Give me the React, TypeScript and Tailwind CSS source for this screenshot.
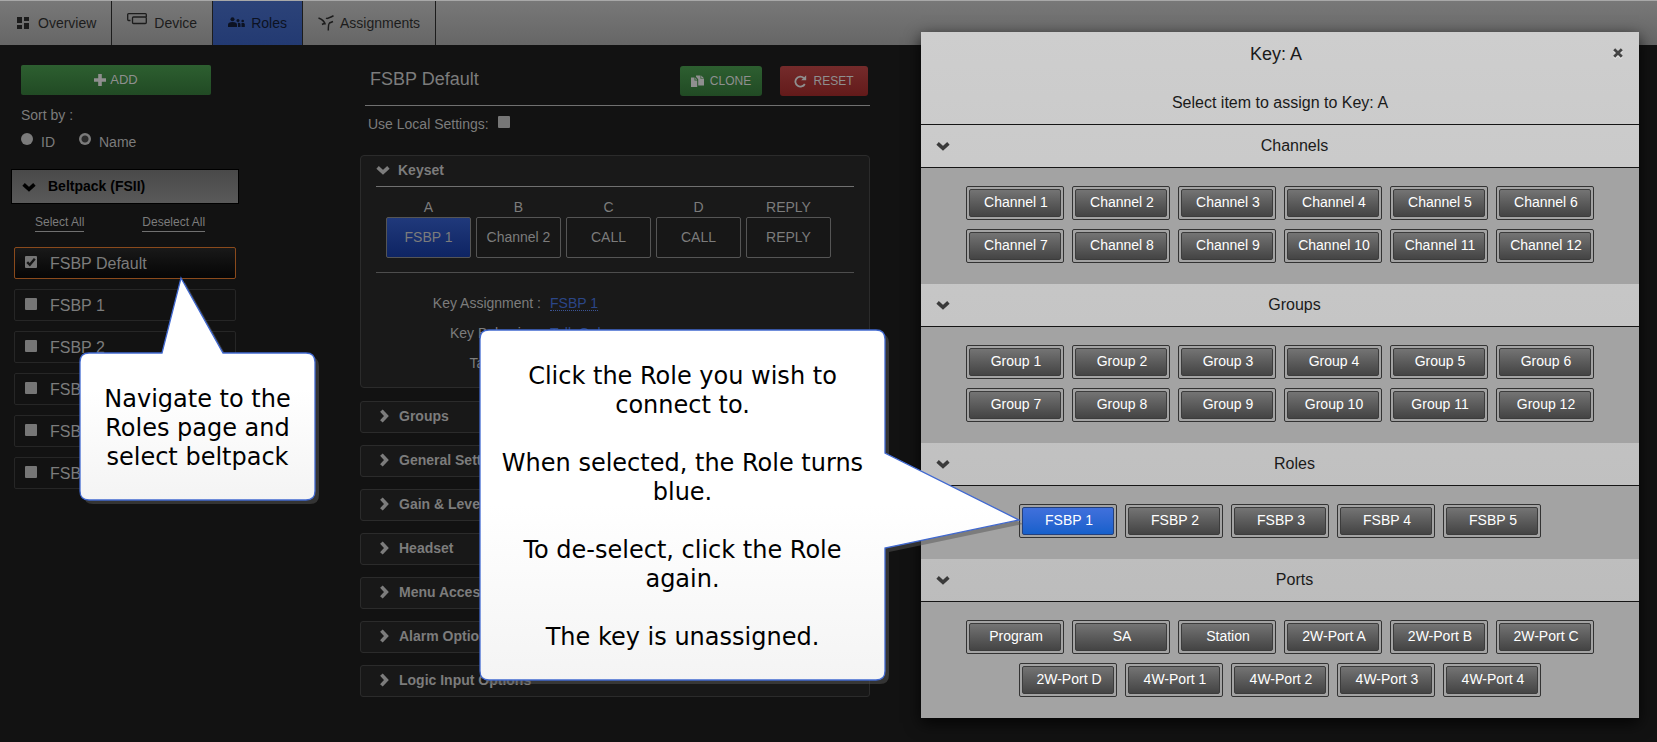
import type { ReactNode } from "react";

const Chevron = ({ className = "", right = false }: { className?: string; right?: boolean }) => (
  <svg viewBox="0 0 14 10" aria-hidden="true" className={`h-[10px] w-[14px] shrink-0 ${right ? "-rotate-90" : ""} ${className}`}>
    <path d="M1.6 2.4 7 7.4l5.400-5" fill="none" stroke="currentColor" strokeWidth="3.600" />
  </svg>
);

const OverviewIcon = () => (
  <svg viewBox="0 0 12 12" aria-hidden="true" className="size-3" fill="currentColor">
    <path d="M0 0h5v6H0zM7 0h5v4H7zM0 8h5v4H0zM7 6h5v6H7z" />
  </svg>
);

const DeviceIcon = () => (
  <svg viewBox="0 0 20 12" aria-hidden="true" className="-mt-2 h-3 w-5" fill="none" stroke="currentColor" strokeWidth="1.300">
    <path d="M3.500 7.500H1.600Q.7 7.500.7 6.600V1.600Q.7.7 1.600.7H18.400Q19.300.7 19.300 1.600V4" />
    <rect x="5.500" y="4" width="13.800" height="6.500" rx="1" />
  </svg>
);

const RolesIcon = () => (
  <svg viewBox="0 0 17 11" aria-hidden="true" className="-mt-[2px] h-[11px] w-[17px]" fill="currentColor">
    <circle cx="4.500" cy="2.200" r="2" />
    <path d="M0 10V7.800C0 6 1.500 5 4.500 5S9 6 9 7.800V10z" />
    <circle cx="10" cy="3.600" r="1.500" />
    <path d="M9.600 5.800h1.200c1.200 0 1.700.7 1.700 1.700V10H10V7.500c0-.7-.1-1.200-.4-1.700z" />
    <circle cx="14.700" cy="4" r="1.300" />
    <path d="M13.500 6h1.700c1.200 0 1.600.7 1.600 1.600V10h-3.300z" />
  </svg>
);

const AssignIcon = () => (
  <svg viewBox="0 0 16 16" aria-hidden="true" className="size-4" fill="none" stroke="currentColor" strokeWidth="1.500">
    <path d="M.5 3C4 4.200 6.500 6.500 7.300 9.500M4 9.500 7 8" />
    <path d="M15.500.8 12.500 2.200Q9.500 4 8 3.200M15 6.500 11.500 8Q10.300 8.800 10.300 15.500" />
  </svg>
);

const CopyIcon = () => (
  <svg viewBox="0 0 13 13" aria-hidden="true" className="size-[13px]" fill="currentColor">
    <path d="M0 2.500h3.500v3H6.200V12H0zM4.300 2.500 6.200 4.700H4.300z" />
    <path d="M5 .5h4.500v3.300H13V10.500H7.200V4.200L5 1.800zM10.200.5 13 3.200h-2.800z" />
  </svg>
);

const ResetIcon = () => (
  <svg viewBox="0 0 13 13" aria-hidden="true" className="size-[13px]">
    <path d="M10.800 9A5 5 0 1 1 9.800 3" fill="none" stroke="currentColor" strokeWidth="1.800" />
    <path d="M12.200.3v5H7.200z" fill="currentColor" />
  </svg>
);

const tabs: { label: string; icon: ReactNode; style: string }[] = [
  { label: "Overview", icon: <OverviewIcon />, style: "gap-[9px] pl-[17px] pr-[15px]" },
  { label: "Device", icon: <DeviceIcon />, style: "gap-[7px] px-[15px]" },
  { label: "Roles", icon: <RolesIcon />, style: "gap-[6px] px-[15px] bg-linear-to-b from-[#2c4379] to-[#233a72] text-[#0c1222]" },
  { label: "Assignments", icon: <AssignIcon />, style: "gap-[6px] px-[15px]" },
];

const beltpacks = ["FSBP Default", "FSBP 1", "FSBP 2", "FSBP 3", "FSBP 4", "FSBP 5"];

const keys = [
  { key: "A", value: "FSBP 1" },
  { key: "B", value: "Channel 2" },
  { key: "C", value: "CALL" },
  { key: "D", value: "CALL" },
  { key: "REPLY", value: "REPLY" },
];

const keyFields = [
  { label: "Key Assignment :", value: "FSBP 1" },
  { label: "Key Behavior :", value: "Talk Only" },
  { label: "Talk Mode :", value: "Latching" },
];

const panels = [
  "Groups",
  "General Settings",
  "Gain & Levels",
  "Headset",
  "Menu Access",
  "Alarm Options",
  "Logic Input Options",
];

const count = (name: string, n: number) => Array.from({ length: n }, (_, i) => `${name} ${i + 1}`);

const sections = [
  { title: "Channels", items: count("Channel", 12) },
  { title: "Groups", items: count("Group", 12) },
  { title: "Roles", items: count("FSBP", 5) },
  {
    title: "Ports",
    items: ["Program", "SA", "Station", "2W-Port A", "2W-Port B", "2W-Port C", "2W-Port D", "4W-Port 1", "4W-Port 2", "4W-Port 3", "4W-Port 4"],
  },
];

const radio =
  "mt-[1px] block size-3 shrink-0 appearance-none rounded-full bg-[#7b7b7b] checked:bg-[radial-gradient(circle,#2b2b2b_0_3px,#7b7b7b_4px)]";

function Checkbox({ checked = false }: { checked?: boolean }) {
  return (
    <span className="grid size-3 shrink-0">
      <input type="checkbox" defaultChecked={checked} className="peer col-start-1 row-start-1 size-3 appearance-none rounded-[1px] bg-[#767676]" />
      <svg viewBox="0 0 12 12" aria-hidden="true" className="pointer-events-none invisible col-start-1 row-start-1 size-3 peer-checked:visible">
        <path d="M2.200 6.200 4.800 8.800l5-6" fill="none" stroke="#161616" strokeWidth="2.400" />
      </svg>
    </span>
  );
}

function Sidebar() {
  return (
    <aside className="flex w-60 shrink-0 flex-col pt-5">
      <button className="mr-[29px] ml-[21px] flex h-[30px] items-center justify-center gap-1 rounded-[2px] bg-linear-to-b from-[#2d5f30] to-[#214a24] text-[13px] text-[#8f8f8f]">
        <svg viewBox="0 0 12 12" aria-hidden="true" className="size-3" fill="currentColor">
          <path d="M4.200 0h3.600v4.200H12v3.600H7.800V12H4.200V7.800H0V4.200h4.200z" />
        </svg>
        ADD
      </button>
      <fieldset className="mt-[10px] pl-[21px]">
        <legend className="leading-5">Sort by :</legend>
        <div className="mt-[7px] flex h-5 gap-6 leading-5">
          <label className="flex items-start gap-2">
            <input type="radio" name="sort" className={radio} />
            ID
          </label>
          <label className="flex items-start gap-2">
            <input type="radio" name="sort" defaultChecked className={radio} />
            Name
          </label>
        </div>
      </fieldset>
      <button className="mt-[17px] mr-[1px] ml-[11px] flex h-[35px] items-center gap-3 border border-black bg-linear-to-b from-[#494949] to-[#5a5a5a] pl-[10px] font-bold text-black">
        <Chevron />
        Beltpack (FSII)
      </button>
      <div className="mt-[9px] flex gap-[58px] pl-[35px] text-[12px]">
        <a href="#select" className="border-b border-[#707070] leading-[18px]">Select All</a>
        <a href="#deselect" className="border-b border-[#707070] leading-[18px]">Deselect All</a>
      </div>
      <ul className="mt-[15px] mr-1 ml-[14px] flex flex-col gap-[10px]">
        {beltpacks.map((name, i) => (
          <li key={name}>
            <label
              className={`flex h-8 items-center gap-[13px] rounded-[2px] border pl-[10px] text-[16px] ${
                i === 0 ? "border-[#8a4a1c] bg-linear-to-b from-[#191919] to-[#060606]" : "border-[#262626]"
              }`}
            >
              <span className="pb-[2px]">
                <Checkbox checked={i === 0} />
              </span>
              <span className="pt-[2px]">{name}</span>
            </label>
          </li>
        ))}
      </ul>
    </aside>
  );
}

function RoleEditor() {
  return (
    <main className="ml-[120px] min-w-0 max-w-[510px] flex-1 pt-5">
      <header className="ml-[5px] flex h-[41px] items-start border-b border-[#707070] pr-[2px] pt-[1px] pl-[5px]">
        <h1 className="mr-auto text-[18px] leading-[26px]">FSBP Default</h1>
        <button className="flex h-[30px] w-[82px] items-center justify-center gap-[6px] rounded-[3px] bg-linear-to-b from-[#2d5f30] to-[#214a24] text-[12px] text-[#8f8f8f]">
          <CopyIcon />
          CLONE
        </button>
        <button className="ml-[18px] flex h-[30px] w-[88px] items-center justify-center gap-[6px] rounded-[3px] bg-linear-to-b from-[#742b2b] to-[#631a1a] text-[12px] text-[#8f8f8f]">
          <ResetIcon />
          RESET
        </button>
      </header>
      <label className="mt-2 flex w-fit gap-[9px] pl-2 leading-5">
        Use Local Settings:
        <span className="pt-[2px]">
          <Checkbox />
        </span>
      </label>
      <section className="mt-[21px] h-[233px] rounded-[4px] border border-[#2b2b2b] bg-[#191919] px-[15px]">
        <h2 className="flex h-[31px] items-center gap-2 border-b border-[#707070] pb-[2px] font-bold">
          <Chevron />
          Keyset
        </h2>
        <div className="mt-[10px] flex justify-start gap-[5px] border-b border-[#4d4d4d] pb-[14px] pl-[10px]">
          {keys.map(({ key, value }, i) => (
            <div key={key} className="w-[85px] text-center">
              <div className="leading-5">{key}</div>
              <button
                className={`h-[41px] w-full rounded-[2px] border border-[#555] ${
                  i === 0 ? "bg-linear-to-b from-[#20397b] to-[#0e2463]" : "bg-[#171717]"
                }`}
              >
                {value}
              </button>
            </div>
          ))}
        </div>
        <dl className="mt-5 flex flex-col gap-[10px]">
          {keyFields.map(({ label, value }) => (
            <div key={label} className="flex gap-[9px] leading-5">
              <dt className="w-[165px] text-right">{label}</dt>
              <dd>
                <a href="#edit" className="block h-[18px] border-b border-dotted border-[#3c5494] text-[#2b4687]">{value}</a>
              </dd>
            </div>
          ))}
        </dl>
      </section>
      <div className="mt-[13px] flex flex-col gap-3">
        {panels.map((name) => (
          <button
            key={name}
            className="flex h-8 items-center gap-2 rounded-[3px] border border-[#2b2b2b] bg-[#181818] pb-[2px] pl-[16px] text-left font-bold"
          >
            <Chevron right />
            {name}
          </button>
        ))}
      </div>
    </main>
  );
}

function AssignDialog() {
  return (
    <div
      role="dialog"
      aria-label="Key: A"
      className="absolute top-8 right-[18px] w-[718px] bg-linear-to-b from-[#cecece] to-[#b9b9b9] text-[#1a1a1a] shadow-[0_5px_15px_#000000cc]"
    >
      <div className="relative h-[92px] pt-[9px] text-center">
        <h2 className="pr-2 text-[18px] leading-[26px]">Key: A</h2>
        <p className="mt-6 text-[16px] leading-6">Select item to assign to Key: A</p>
        <button aria-label="Close" className="absolute top-4 right-4 text-[#444]">
          <svg viewBox="0 0 10 10" aria-hidden="true" className="size-[10px] overflow-visible">
            <path d="m1.200 2.400 7.600 7.600m0-7.600-7.600 7.600" stroke="#e8e8e8" strokeWidth="2.800" />
            <path d="m1.200 1.200 7.600 7.600m0-7.600-7.600 7.600" stroke="currentColor" strokeWidth="2.800" />
          </svg>
        </button>
      </div>
      {sections.map(({ title, items }, s) => (
        <section key={title}>
          <h3
            className={`flex items-center border-b border-[#151515] pl-[15px] text-[16px] ${
              s === 0 ? "h-[44px] border-t" : "h-[43px]"
            }`}
          >
            <Chevron className="text-[#3a3a3a]" />
            <span className="flex-1 text-center">{title}</span>
          </h3>
          <div className="flex flex-wrap justify-center gap-x-2 gap-y-[9px] bg-[#a3a3a3] pt-[18px] pb-[21px]">
            {items.map((item) => (
              <button key={item} className="h-[34px] w-[98px] rounded-[2px] border border-[#333] p-[2px] text-white">
                <span
                  className={`flex h-full items-center justify-center rounded-[2px] border pb-[2px] pl-[2px] ${
                    item === "FSBP 1"
                      ? "border-[#24407c] bg-linear-to-b from-[#4070dc] to-[#1560cb]"
                      : "border-[#3c3c3c] bg-linear-to-b from-[#747474] to-[#444]"
                  }`}
                >
                  {item}
                </span>
              </button>
            ))}
          </div>
        </section>
      ))}
    </div>
  );
}

function Callout({ place, view, path, children, text }: { place: string; view: string; path: string; children: ReactNode; text: string }) {
  const id = `fill-${text.length}`;
  return (
    <div className={`absolute ${place}`}>
      <svg viewBox={view} aria-hidden="true" className="absolute inset-0 size-full overflow-visible">
        <defs>
          <linearGradient id={id} x2="0" y2="1">
            <stop offset="0.500" stopColor="#fff" />
            <stop offset="1" stopColor="#f4f4f4" />
          </linearGradient>
        </defs>
        <path d={path} transform="translate(4 4)" fill="#555" fillOpacity="0.500" />
        <path d={path} fill={`url(#${id})`} stroke="#4169d0" strokeWidth="1.300" />
      </svg>
      <div className={`relative text-center font-['DejaVu_Sans',sans-serif] text-[24px] leading-[29px] text-black ${text}`}>{children}</div>
    </div>
  );
}

export default function App() {
  return (
    <div className="relative min-h-screen overflow-hidden bg-[#121212] font-['Liberation_Sans',Arial,sans-serif] text-[14px] text-[#7c7c7c]">
      <nav className="flex h-[45px] border-t border-[#a8a8a8] bg-linear-to-b from-[#787878] to-[#666] text-[#1c1c1c]">
        {tabs.map(({ label, icon, style }) => (
          <a key={label} href={`#${label.toLowerCase()}`} className={`flex items-center border-r border-[#1c1c1c] ${style}`}>
            {icon}
            {label}
          </a>
        ))}
      </nav>
      <div className="flex">
        <Sidebar />
        <RoleEditor />
      </div>
      <AssignDialog />
      <Callout
        place="top-[353px] left-[80px] h-[147px] w-[235px]"
        view="0 0 235 147"
        path="M9 0H82L101-75 143 0H226Q235 0 235 9V138Q235 147 226 147H9Q0 147 0 138V9Q0 0 9 0Z"
        text="pt-8"
      >
        <p>
          Navigate to the
          <br />
          Roles page and
          <br />
          select beltpack
        </p>
      </Callout>
      <Callout
        place="top-[330px] left-[480px] h-[350px] w-[405px]"
        view="0 0 405 350"
        path="M9 0H396Q405 0 405 9V123L539 190 405 218V341Q405 350 396 350H9Q0 350 0 341V9Q0 0 9 0Z"
        text="flex flex-col gap-[29px] px-4 pt-8"
      >
        <p>
          Click the Role you wish to
          <br />
          connect to.
        </p>
        <p>
          When selected, the Role turns
          <br />
          blue.
        </p>
        <p>
          To de-select, click the Role
          <br />
          again.
        </p>
        <p>The key is unassigned.</p>
      </Callout>
    </div>
  );
}
